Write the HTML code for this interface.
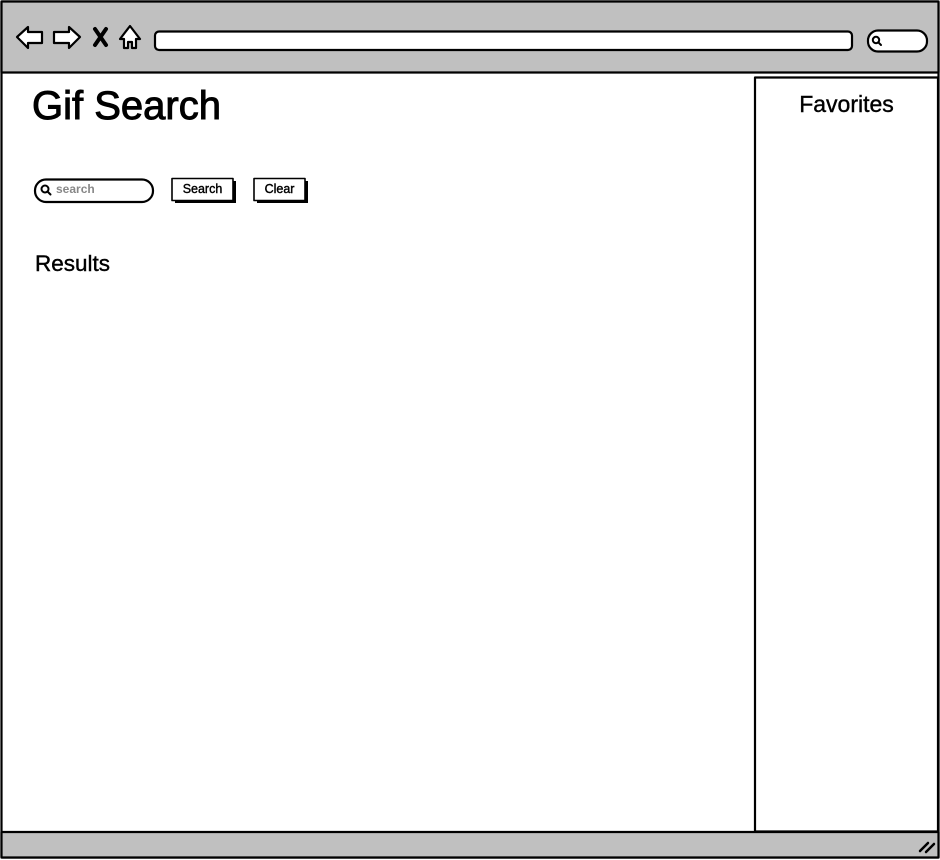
<!DOCTYPE html>
<html><head><meta charset="utf-8"><style>
html,body{margin:0;padding:0;background:#fff;}
body{width:940px;height:860px;position:relative;overflow:hidden;font-family:"Liberation Sans",sans-serif;}
.t{position:absolute;color:#000;white-space:nowrap;-webkit-text-stroke:0.4px #000;}
</style></head><body>
<svg width="940" height="860" style="position:absolute;left:0;top:0" fill="none" stroke="#000" stroke-width="2.2" stroke-linejoin="round" stroke-linecap="round">
<rect x="1.5" y="1.5" width="937" height="856" fill="#fff"/>
<rect x="1.5" y="1.5" width="937" height="71" fill="#c0c0c0"/>
<rect x="1.5" y="832" width="937" height="25.5" fill="#c0c0c0"/>
<rect x="755" y="77.5" width="183" height="754" fill="#fff"/>
<path d="M17 37 L28 27 L28 32 L42 32 L42 43 L28 43 L28 48 Z" fill="#fff"/>
<path d="M80 37 L69 27 L69 32 L54 32 L54 43 L69 43 L69 48 Z" fill="#fff"/>
<path d="M95 29 L106 45 M106 29 L95 45" stroke-width="4"/>
<path d="M120 39 L130 26 L140 39 L136 39 L136 48 L132 48 L132 42 L128 42 L128 48 L124 48 L124 39 Z" fill="#fff"/>
<rect x="155" y="31.5" width="697" height="18.5" rx="4" fill="#fff"/>
<rect x="868" y="30.5" width="59" height="21" rx="10" fill="#fff"/>
<circle cx="876" cy="40" r="3.2" stroke-width="2"/><path d="M878.5 42.5 L881 45" stroke-width="2"/>
<rect x="35" y="179.5" width="118" height="22.5" rx="11" fill="#fff"/>
<circle cx="45" cy="189" r="3.5" stroke-width="2"/><path d="M47.5 191.5 L50.5 194.5" stroke-width="2"/>
<rect x="175" y="181" width="61" height="22" fill="#000" stroke="none"/>
<rect x="172" y="178.5" width="61" height="22" fill="#fff" stroke-width="1.6"/>
<rect x="257" y="181" width="51" height="22" fill="#000" stroke="none"/>
<rect x="254" y="178.5" width="51" height="22" fill="#fff" stroke-width="1.6"/>
<path d="M920 851 L928 843 M926 852 L934 844" stroke-width="2.5"/>
</svg>
<div class="t" style="left:32px;top:84px;font-size:40px;-webkit-text-stroke:1px #000;">Gif Search</div>
<div class="t" style="left:56px;top:182px;font-size:12px;color:#888;font-weight:bold;-webkit-text-stroke:0;">search</div>
<div class="t" style="left:172px;top:182px;width:61px;text-align:center;font-size:12.5px;">Search</div>
<div class="t" style="left:254px;top:182px;width:51px;text-align:center;font-size:12.5px;">Clear</div>
<div class="t" style="left:35px;top:251px;font-size:22.5px;">Results</div>
<div class="t" style="left:755px;top:91px;width:183px;text-align:center;font-size:23px;">Favorites</div>
</body></html>
